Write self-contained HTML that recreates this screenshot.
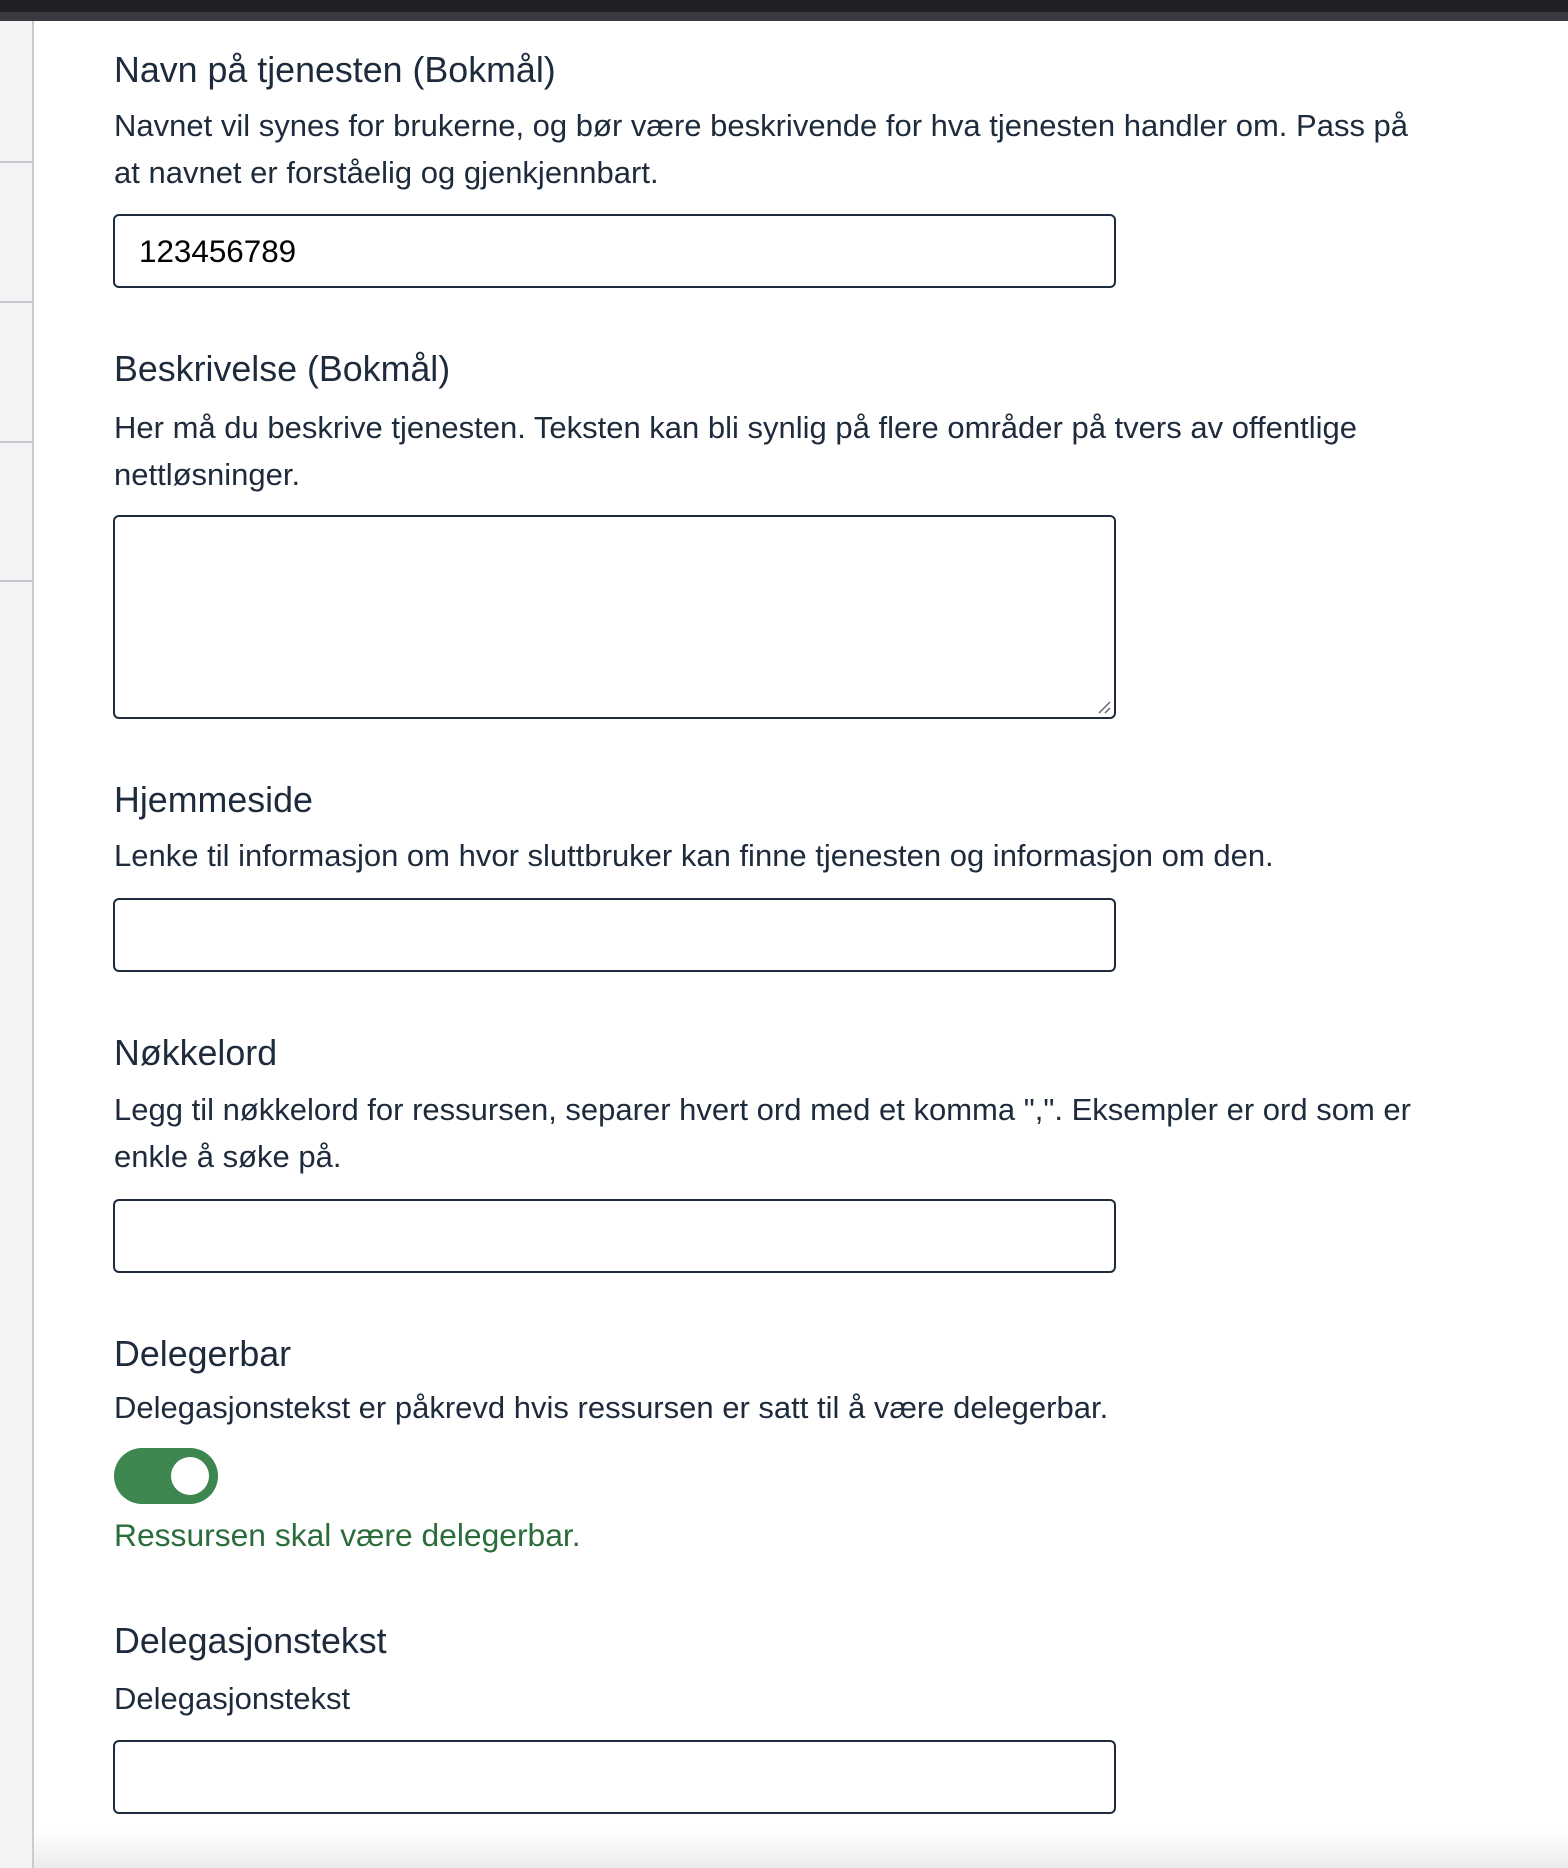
<!DOCTYPE html>
<html><head><meta charset="utf-8"><style>
*{margin:0;padding:0;box-sizing:border-box}
body{width:1568px;height:1868px;overflow:hidden;background:#fff;font-family:"Liberation Sans",Arial,sans-serif;color:#1e2b3c;position:relative}
.top1{position:absolute;left:0;top:0;width:1568px;height:12px;background:#1f2126}
.top2{position:absolute;left:0;top:12px;width:1568px;height:9px;background:#393a3f}
.side{position:absolute;left:0;top:21px;width:34px;height:1847px;background:#f2f3f5;border-right:2px solid #c9cbcf}
.hl{position:absolute;left:0;width:32px;height:2px;background:#c6c8cc}
.h{position:absolute;left:114px;font-size:35.8px;line-height:40px;white-space:nowrap}
.d{position:absolute;left:114px;font-size:31px;line-height:47px;white-space:nowrap}
.in{position:absolute;left:113px;width:1003px;height:74px;border:2px solid #1e2b3c;border-radius:6px;background:#fff}
.tog{position:absolute;left:114px;top:1448px;width:104px;height:56px;border-radius:28px;background:#3d8650}
.tog div{position:absolute;right:9px;top:9px;width:38px;height:38px;border-radius:50%;background:#fff}
.shadow{position:absolute;left:34px;top:1830px;width:1534px;height:38px;background:linear-gradient(#fff,#ebebec)}
</style></head><body>
<div class="top1"></div><div class="top2"></div>
<div class="side"></div>
<div class="hl" style="top:161px"></div>
<div class="hl" style="top:301px"></div>
<div class="hl" style="top:441px"></div>
<div class="hl" style="top:580px"></div>

<div class="h" style="top:50px">Navn på tjenesten (Bokmål)</div>
<div class="d" style="top:102px">Navnet vil synes for brukerne, og bør være beskrivende for hva tjenesten handler om. Pass på<br>at navnet er forståelig og gjenkjennbart.</div>
<div class="in" style="top:214px"><span style="position:absolute;left:24px;top:18px;font-size:31.4px;color:#000">123456789</span></div>

<div class="h" style="top:349px">Beskrivelse (Bokmål)</div>
<div class="d" style="top:404px">Her må du beskrive tjenesten. Teksten kan bli synlig på flere områder på tvers av offentlige<br>nettløsninger.</div>
<div class="in" style="top:515px;height:204px"><svg style="position:absolute;right:2px;bottom:2px" width="16" height="16"><path d="M3 14L14 3M9 14L14 9" stroke="#666" stroke-width="1.5"/></svg></div>

<div class="h" style="top:780px">Hjemmeside</div>
<div class="d" style="top:832px">Lenke til informasjon om hvor sluttbruker kan finne tjenesten og informasjon om den.</div>
<div class="in" style="top:898px"></div>

<div class="h" style="top:1033px">Nøkkelord</div>
<div class="d" style="top:1086px">Legg til nøkkelord for ressursen, separer hvert ord med et komma ",". Eksempler er ord som er<br>enkle å søke på.</div>
<div class="in" style="top:1199px"></div>

<div class="h" style="top:1334px">Delegerbar</div>
<div class="d" style="top:1384px">Delegasjonstekst er påkrevd hvis ressursen er satt til å være delegerbar.</div>
<div class="tog"><div></div></div>
<div class="d" style="top:1512px;color:#2a6d3b;font-size:31.8px">Ressursen skal være delegerbar.</div>

<div class="h" style="top:1621px">Delegasjonstekst</div>
<div class="d" style="top:1675px">Delegasjonstekst</div>
<div class="shadow"></div>
<div class="in" style="top:1740px"></div>
</body></html>
